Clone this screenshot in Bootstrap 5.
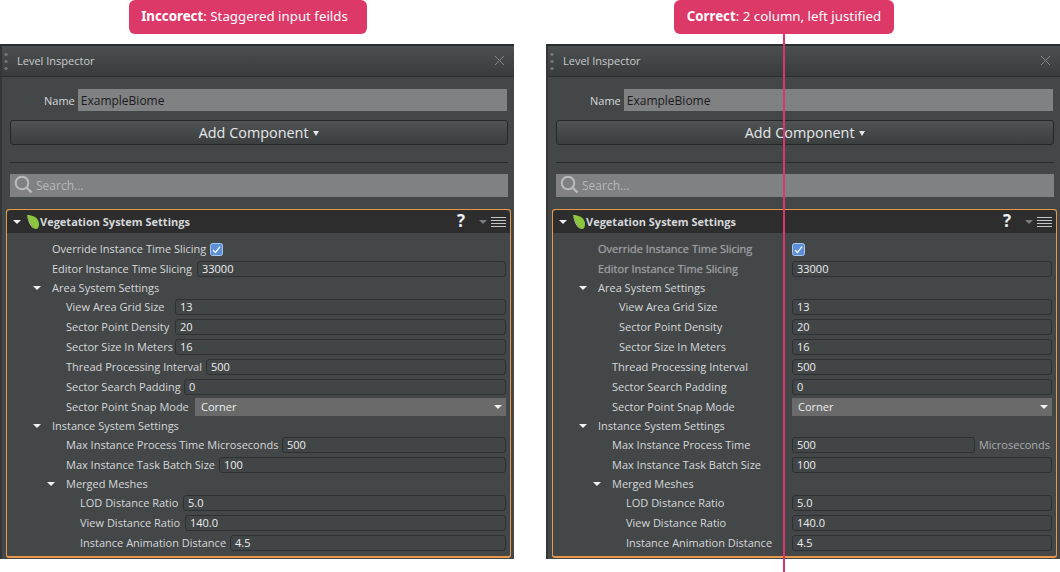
<!DOCTYPE html>
<html lang="en">
<head>
  <meta charset="UTF-8" />
  <title>Level Inspector</title>
  <link href="https://cdn.jsdelivr.net/npm/bootstrap@5.3.0/dist/css/bootstrap.min.css" rel="stylesheet" />
  <style>
    body {
      background: #fff;
      font-family: "Open Sans", "Noto Sans", sans-serif;
      font-size: 11px;
      height: 572px;
      overflow: hidden;
    }
    .page { width: 1060px; gap: 32px; }
    .side { width: 514px; height: 572px; position: relative; }
    .callout {
      height: 34px;
      margin-bottom: 10px;
      background: #dc3868;
      color: #fff;
      border-radius: 6px;
      font: 13.3px/33px "Noto Sans", sans-serif;
      text-align: center;
    }
    .callout-bad { width: 238px; margin-left: 129px; padding-right: 7px; }
    .callout-good { width: 220px; margin-left: 128px; }
    .pin { position: absolute; left: 237px; top: 34px; bottom: 0; width: 2px; background: #d8366c; }

    .inspector { height: 515px; background: #444748; border-top: 2px solid #2b2d2e; border-left: 2px solid #333536; color: #d5d8da; }
    .title-bar { height: 31px; padding: 0 9px 0 15px; background: linear-gradient(#4c4f50, #393c3d); border-bottom: 1px solid #2c2e2f; color: #c8cbcd; position: relative; }
    .title-bar svg { margin-bottom: 2px; }
    .grip { position: absolute; left: 2px; top: 5px; width: 4px; height: 21px; background: radial-gradient(circle, #6f7274 0, #6f7274 1.4px, transparent 1.9px) 0 0 / 4px 7px; }
    .name-row { margin: 12px 7px 9px 42px; height: 22px; gap: 3px; }
    .name-row label { color: #d5d8da; margin-top: 4px; }
    .grey-box { background: #808183; }
    .name-box { height: 22px; line-height: 24px; padding-left: 3px; color: #1c1c1c; font-size: 12px; }
    .add-btn {
      display: block; width: 498px; height: 25px; margin-left: 8px; padding: 0;
      background: linear-gradient(#505354, #3b3e3f); border: 1px solid #25282a; border-radius: 3px;
      color: #e4e7e9; font-size: 14.4px; line-height: 22px;
    }
    .add-btn:hover { background: #505354; color: #e4e7e9; border-color: #25282a; }
    .add-btn i { display: inline-block; border: 3px solid transparent; border-top: 5px solid #e4e7e9; border-bottom: 0; margin-left: 1px; vertical-align: 2px; }
    .rule { width: 498px; margin: 17px 0 11px 8px; border-top: 1px solid #2a2c2d; opacity: 1; }
    .search-box { width: 498px; height: 23px; margin-left: 8px; padding-left: 4px; gap: 3px; color: #b6b8ba; font-size: 12px; }
    .search-box svg { margin-top: -2px; }

    .settings { width: 505px; height: 349px; margin: 12px 0 0 4px; background: transparent; border: 1px solid #e8984a; border-bottom-width: 2px; border-radius: 3px; color: #d5d8da; }
    .settings-head { height: 23px; padding: 1px 4px 0 6px; background: #2d2d2d; border: 0; border-radius: 2px 2px 0 0; color: #d5d8da; font-weight: 700; font-size: 11px; }
    .leaf { margin: -1px 0 0 5px; }
    .help-mark { color: #eceeef; font-size: 17px; font-weight: 700; line-height: 1; margin: -3px 14px 0 0; }
    .tri { width: 0; height: 0; border: 4px solid transparent; border-top: 4px solid #f1f2f3; border-bottom: 0; flex: none; }
    .tri-dim { border-top-color: #7a7c7e; }
    .settings-body { padding: 6px 0 0; }

    .prop { height: 20px; padding-right: 4px; white-space: nowrap; }
    .prop-group { height: 18px; }
    .prop-label { flex: 0 0 auto; }
    .dim { color: #9a9d9f; text-shadow: 0 0 1px #8d9092; }
    .value {
      flex: 1; height: 16px; min-height: 0; padding: 0 4px; min-width: 0;
      background: #424546; border: 1px solid #2e3132; border-radius: 3px;
      color: #eceeef; font-size: 11px; line-height: 14px;
    }
    .value-combo { height: 18px; padding: 0 6px; border: 0; border-radius: 0; background: #6a6a6a; position: relative; line-height: 18px; }
    .value-combo .tri { position: absolute; right: 4px; top: 7px; }
    .tick { width: 13px; height: 13px; }
    .unit { color: #a9acae; margin-left: 4px; margin-right: 2px; }
  </style>
</head>
<body>
  <div class="page d-flex">
    <div class="side" id="sideBad">
      <div class="callout callout-bad"><strong>Inccorect</strong>: Staggered input feilds</div>
    </div>
    <div class="side" id="sideGood">
      <div class="callout callout-good"><strong>Correct</strong>: 2 column, left justified</div>
    </div>
  </div>

  <script>
    // x = label left edge inside the card, fieldX = where the field starts in the staggered panel
    const rows = [
      { label: "Override Instance Time Slicing", x: 45, fieldX: 210, check: true, dim: true },
      { label: "Editor Instance Time Slicing", x: 45, fieldX: 197, value: "33000", dim: true },
      { label: "Area System Settings", x: 45, group: true },
      { label: "View Area Grid Size", x: 59, alignedX: 66, fieldX: 175, value: "13" },
      { label: "Sector Point Density", x: 59, alignedX: 66, fieldX: 175, value: "20" },
      { label: "Sector Size In Meters", x: 59, alignedX: 66, fieldX: 175, value: "16" },
      { label: "Thread Processing Interval", x: 59, fieldX: 206, value: "500" },
      { label: "Sector Search Padding", x: 59, fieldX: 184, value: "0" },
      { label: "Sector Point Snap Mode", x: 59, fieldX: 195, value: "Corner", combo: true },
      { label: "Instance System Settings", x: 45, group: true },
      { label: "Max Instance Process Time", x: 59, fieldX: 282, value: "500", unit: "Microseconds" },
      { label: "Max Instance Task Batch Size", x: 59, fieldX: 219, value: "100" },
      { label: "Merged Meshes", x: 59, group: true },
      { label: "LOD Distance Ratio", x: 73, fieldX: 183, value: "5.0" },
      { label: "View Distance Ratio", x: 73, fieldX: 185, value: "140.0" },
      { label: "Instance Animation Distance", x: 73, fieldX: 230, value: "4.5" }
    ];

    const tickSvg = `<svg class="tick" viewBox="0 0 13 13"><rect x=".5" y=".5" width="12" height="12" rx="2" fill="#5b8fd8" stroke="#a9c6ee"/><path d="M3 7l2.4 2.6L10 3.6" fill="none" stroke="#fff" stroke-width="1.3"/></svg>`;

    function rowHtml(r, aligned) {
      if (r.group) {
        return `<div class="prop prop-group d-flex align-items-center" style="padding-left:${r.x - 19}px">
          <span class="tri"></span><span style="margin-left:11px">${r.label}</span></div>`;
      }
      const x = aligned ? (r.alignedX || r.x) : r.x;
      // card content starts at page x=7 in the left panel
      const labelWidth = aligned ? 239 - x : r.fieldX - 7 - x;
      const dim = aligned && r.dim ? " dim" : "";
      const labelText = !aligned && r.unit ? `${r.label} ${r.unit}` : r.label;
      let field;
      if (r.check) field = tickSvg;
      else if (r.combo) field = `<div class="form-control value value-combo">${r.value}<span class="tri"></span></div>`;
      else field = `<div class="form-control value">${r.value}</div>`;
      const unit = aligned && r.unit ? `<span class="unit">${r.unit}</span>` : "";
      return `<div class="prop d-flex align-items-center" style="padding-left:${x}px">
        <span class="prop-label${dim}" style="width:${labelWidth}px">${labelText}</span>${field}${unit}</div>`;
    }

    function panelHtml(aligned) {
      return `<div class="inspector">
        <div class="title-bar d-flex align-items-center justify-content-between">
          <span class="grip"></span><span>Level Inspector</span>
          <svg width="11" height="11" viewBox="0 0 11 11"><path d="M1 1l9 9M10 1l-9 9" stroke="#85888a" stroke-width="1"/></svg>
        </div>
        <div class="name-row d-flex">
          <label>Name</label><div class="grey-box name-box flex-fill">ExampleBiome</div>
        </div>
        <button class="btn add-btn" type="button">Add Component <i></i></button>
        <hr class="rule">
        <div class="grey-box search-box d-flex align-items-center">
          <svg width="19" height="19" viewBox="0 0 19 19"><circle cx="8" cy="8" r="6.3" fill="none" stroke="#b9bbbd" stroke-width="2"/><path d="M12.5 12.5l5 5" stroke="#b9bbbd" stroke-width="2.4"/></svg>
          <span>Search...</span>
        </div>
        <div class="card settings">
          <div class="card-header settings-head d-flex align-items-center">
            <span class="tri"></span>
            <svg class="leaf" width="14" height="16" viewBox="0 0 14 16"><path d="M1 1c5 0 11 2 12 8 .2 4-1 6-3 6C6 15 3 7 1 1z" fill="#8cc63f"/><path d="M1 1c2 6 4 11 7 14C5 13 2 8 1 1z" fill="#d7e9a8"/></svg>
            <span class="flex-fill">Vegetation System Settings</span>
            <span class="help-mark">?</span>
            <span class="tri tri-dim me-1"></span>
            <svg width="15" height="11" viewBox="0 0 15 11"><path d="M0 .5h15M0 3.5h15M0 6.5h15M0 9.5h15" stroke="#c4c7c9"/></svg>
          </div>
          <div class="card-body settings-body">${rows.map(r => rowHtml(r, aligned)).join("")}</div>
        </div>
      </div>`;
    }

    document.getElementById("sideBad").insertAdjacentHTML("beforeend", panelHtml(false));
    document.getElementById("sideGood").insertAdjacentHTML("beforeend", panelHtml(true) + '<div class="pin"></div>');
  </script>
  <script src="https://cdn.jsdelivr.net/npm/bootstrap@5.3.0/dist/js/bootstrap.bundle.min.js"></script>
</body>
</html>
